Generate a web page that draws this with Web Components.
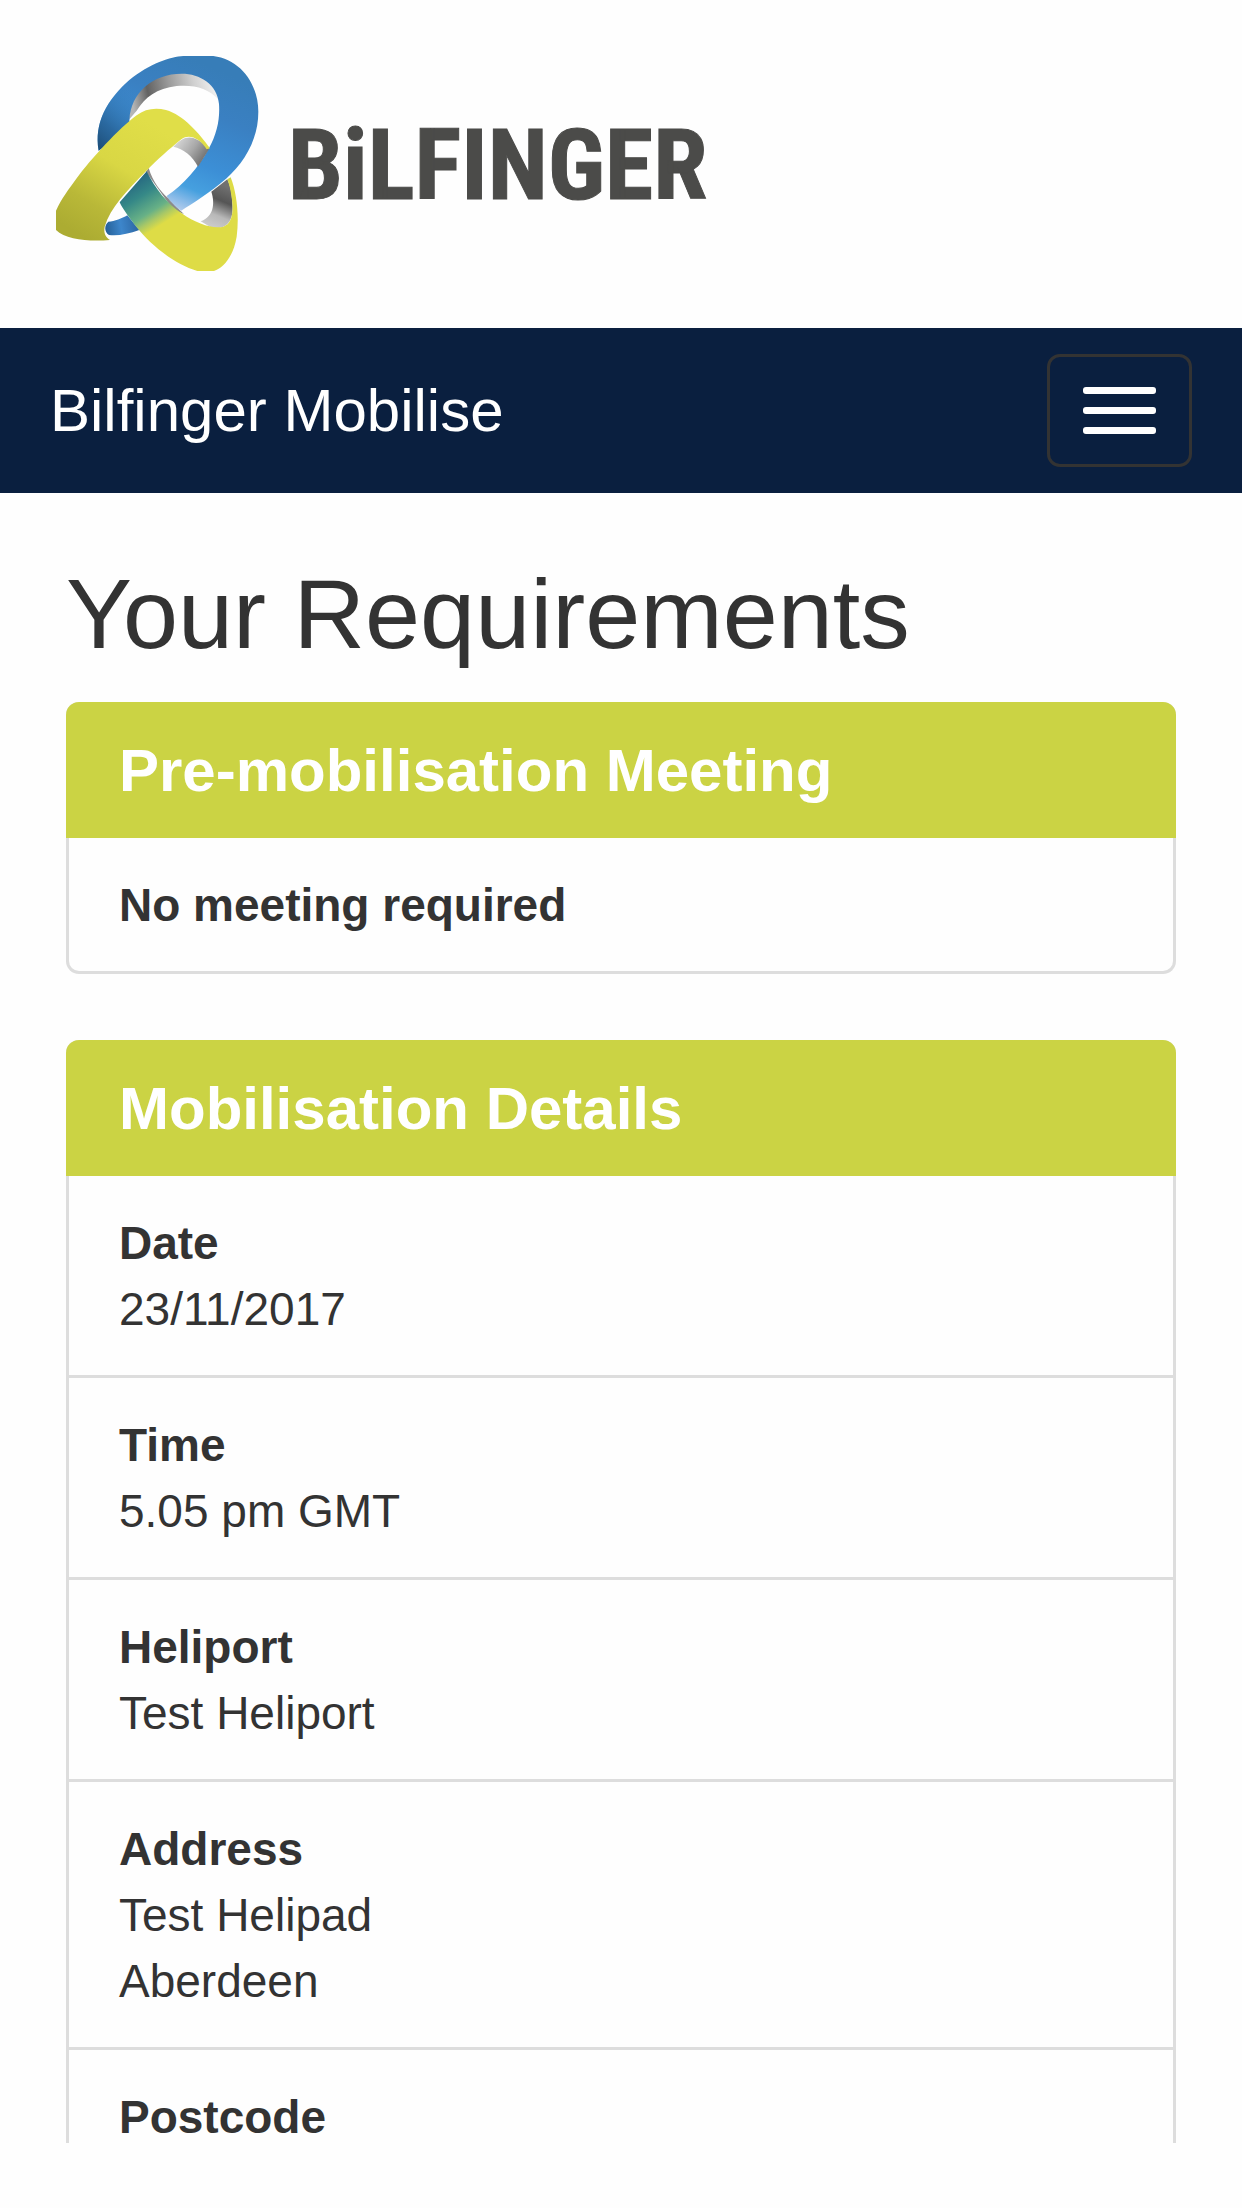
<!DOCTYPE html>
<html lang="en">
<head>
<meta charset="utf-8">
<meta name="viewport" content="width=device-width, initial-scale=1">
<title>Bilfinger Mobilise</title>
<style>
  body {
    margin: 0;
    background: #fefefe;
    color: #333;
    font: 46px/66px "Liberation Sans", Arial, sans-serif;
    --gutter: 66px;
    --line: #ddd;
    --lime: #cbd344;
    --navy: #0a1f3f;
  }
</style>
</head>
<body>
<mobilise-app>
  <brand-logo slot="top"></brand-logo>
  <nav-bar slot="top">Bilfinger Mobilise</nav-bar>
  <page-title>Your Requirements</page-title>
  <info-panel>
    <span slot="heading">Pre-mobilisation Meeting</span>
    <info-row><span slot="label">No meeting required</span></info-row>
  </info-panel>
  <info-panel>
    <span slot="heading">Mobilisation Details</span>
    <info-row><span slot="label">Date</span>23/11/2017</info-row>
    <info-row><span slot="label">Time</span>5.05 pm GMT</info-row>
    <info-row><span slot="label">Heliport</span>Test Heliport</info-row>
    <info-row><span slot="label">Address</span>Test Helipad<br>Aberdeen</info-row>
    <info-row><span slot="label">Postcode</span></info-row>
  </info-panel>
</mobilise-app>

<script>
const define = (name, html) => {
  const template = document.createElement('template');
  template.innerHTML = html;
  customElements.define(name, class extends HTMLElement {
    constructor() {
      super();
      this.attachShadow({ mode: 'open' }).append(template.content.cloneNode(true));
    }
  });
};

define('mobilise-app', `
  <style>
    :host { display: flex; flex-direction: column; height: 100vh; }
    .view { flex: 1; min-height: 0; overflow: hidden; }
    main { padding: 66px var(--gutter) 0; }
    footer { flex: none; height: 65px; }
  </style>
  <div class="view">
    <slot name="top"></slot>
    <main><slot></slot></main>
  </div>
  <footer></footer>`);

define('brand-logo', `
  <style>
    :host { display: block; padding: 56px; }
    svg { display: block; width: 650px; max-width: 100%; height: auto; overflow: visible; }
    text { font: bold 98px "Roboto Condensed", Roboto, "Liberation Sans", sans-serif; fill: #4b4b49; stroke: #4b4b49; stroke-width: 1px; }
  </style>
  <svg viewBox="0 0 650 216" role="img" aria-label="Bilfinger">
    <defs>
      <linearGradient id="blue" gradientUnits="userSpaceOnUse" x1="560" y1="100" x2="390" y2="500">
        <stop offset="0" stop-color="#377db8"/><stop offset=".3" stop-color="#3a80c2"/><stop offset=".65" stop-color="#3c8fd6"/><stop offset=".83" stop-color="#46a0df"/><stop offset=".93" stop-color="#8abbe8"/><stop offset="1" stop-color="#b5cdec"/>
      </linearGradient>
      <linearGradient id="shade" gradientUnits="userSpaceOnUse" x1="170" y1="320" x2="300" y2="170">
        <stop offset="0" stop-color="#1c4d78"/><stop offset=".35" stop-color="#265f92" stop-opacity=".8"/><stop offset="1" stop-color="#397fbd" stop-opacity="0"/>
      </linearGradient>
      <linearGradient id="lime" gradientUnits="userSpaceOnUse" x1="330" y1="250" x2="130" y2="590">
        <stop offset="0" stop-color="#e0de48"/><stop offset=".4" stop-color="#d9d744"/><stop offset=".75" stop-color="#b9b838"/><stop offset="1" stop-color="#acac32"/>
      </linearGradient>
      <linearGradient id="teal" gradientUnits="userSpaceOnUse" x1="290" y1="415" x2="400" y2="590">
        <stop offset="0" stop-color="#276881"/><stop offset=".25" stop-color="#358887"/><stop offset=".52" stop-color="#68b186"/><stop offset=".64" stop-color="#a9c866"/><stop offset=".76" stop-color="#dedc46"/>
      </linearGradient>
      <linearGradient id="grayTop" gradientUnits="userSpaceOnUse" x1="280" y1="200" x2="530" y2="150">
        <stop offset="0" stop-color="#b5b5b5"/><stop offset=".2" stop-color="#626262"/><stop offset=".45" stop-color="#989898"/><stop offset=".75" stop-color="#d0d0d0"/><stop offset="1" stop-color="#f1f1f1"/>
      </linearGradient>
      <linearGradient id="grayMid" gradientUnits="userSpaceOnUse" x1="415" y1="305" x2="495" y2="360">
        <stop offset="0" stop-color="#d2d2d2"/><stop offset=".5" stop-color="#a8a8a8"/><stop offset="1" stop-color="#6d6d6d"/>
      </linearGradient>
      <linearGradient id="grayRight" gradientUnits="userSpaceOnUse" x1="560" y1="440" x2="510" y2="560">
        <stop offset="0" stop-color="#707070"/><stop offset=".35" stop-color="#555"/><stop offset=".7" stop-color="#b8b8b8"/><stop offset="1" stop-color="#ccc"/>
      </linearGradient>
      <linearGradient id="tail" gradientUnits="userSpaceOnUse" x1="195" y1="565" x2="290" y2="550">
        <stop offset="0" stop-color="#255f96"/><stop offset=".5" stop-color="#3d86cb"/><stop offset="1" stop-color="#2e69a6"/>
      </linearGradient>
    </defs>
    <g transform="translate(-16 -16) scale(.33333)">
      <path fill="url(#grayTop)" d="M266 240C268 155 335 94 425 96C485 98 528 130 535 178C505 145 462 133 410 138C350 145 315 172 290 212Z"/>
      <path fill="url(#blue)" d="M176 332C162 250 200 180 268 120C330 70 392 50 430 48L520 48C600 58 655 130 655 215C655 300 612 368 560 415C510 458 456 492 424 512C405 502 390 487 380 468C432 434 474 384 505 328C532 280 540 235 537 192C532 133 480 101 425 101C338 101 272 158 268 240L268 260Z"/>
      <path fill="url(#shade)" d="M176 332C162 250 200 180 268 120L330 130C290 155 270 198 268 240L268 260Z"/>
      <path fill="url(#grayMid)" d="M400 320C420 298 440 288 460 294C485 302 500 320 508 326L474 380C458 348 430 326 400 320Z"/>
      <path fill="url(#grayRight)" d="M562 418L514 455C526 492 520 530 482 544L520 566C560 566 582 545 577 490C575 452 570 436 562 418Z"/>
      <path fill="#8b8b8b" d="M326 384C338 425 362 455 384 474C400 496 420 510 432 522L400 510L318 395Z"/>
      <path fill="url(#tail)" d="M205 545C225 545 245 535 262 526L298 570C265 582 235 588 207 585C192 575 193 555 205 545Z"/>
      <path fill="url(#teal)" d="M320 394C345 445 382 492 425 520C470 552 520 568 550 560C575 552 581 520 576 480C573 450 567 432 562 418L572 412C591 460 598 530 590 590C580 650 550 684 522 693L472 693C400 672 330 612 290 562C270 535 248 508 239 487Z"/>
      <path fill="url(#lime)" d="M48 512C65 475 85 450 110 415C150 360 240 262 290 226C315 207 345 202 378 210C430 225 478 280 510 325L500 328C480 295 448 281 425 297C390 325 350 360 318 394C262 450 210 505 194 560C190 580 198 592 210 600C150 605 78 600 48 570Z"/>
    </g>
    <text x="232" y="143">BiLFINGER</text>
  </svg>`);

define('nav-bar', `
  <style>
    :host { display: flex; align-items: center; justify-content: space-between; padding: 26px 50px; background: var(--navy); }
    a { color: #fff; font-size: 60px; text-decoration: none; font-variant-ligatures: none; }
    button { display: flex; flex-direction: column; gap: 13px; padding: 30px 33px; border: 3px solid #333; border-radius: 13px; background: transparent; }
    i { width: 73px; height: 7px; border-radius: 3px; background: #fff; }
  </style>
  <a href="#"><slot></slot></a>
  <button type="button" aria-label="Toggle navigation"><i></i><i></i><i></i></button>`);

define('page-title', `
  <style>
    :host { display: block; margin-bottom: 33px; }
    h1 { margin: 0; font-size: 99px; line-height: 110px; font-weight: normal; }
  </style>
  <h1><slot></slot></h1>`);

define('info-panel', `
  <style>
    :host { display: block; margin-bottom: 66px; }
    section { border: 3px solid var(--line); border-top: 0; border-radius: 13px; }
    h2 { margin: 0 -3px; padding: 36px 53px 34px; border-radius: 13px 13px 0 0; background: var(--lime); color: #fff; font-size: 60px; line-height: 66px; }
  </style>
  <section>
    <h2><slot name="heading"></slot></h2>
    <slot></slot>
  </section>`);

define('info-row', `
  <style>
    :host { display: block; padding: 34px 50px 33px; border-bottom: 3px solid var(--line); }
    :host(:last-child) { border-bottom: 0; }
    strong { display: block; }
  </style>
  <strong><slot name="label"></slot></strong>
  <slot></slot>`);
</script>
</body>
</html>
